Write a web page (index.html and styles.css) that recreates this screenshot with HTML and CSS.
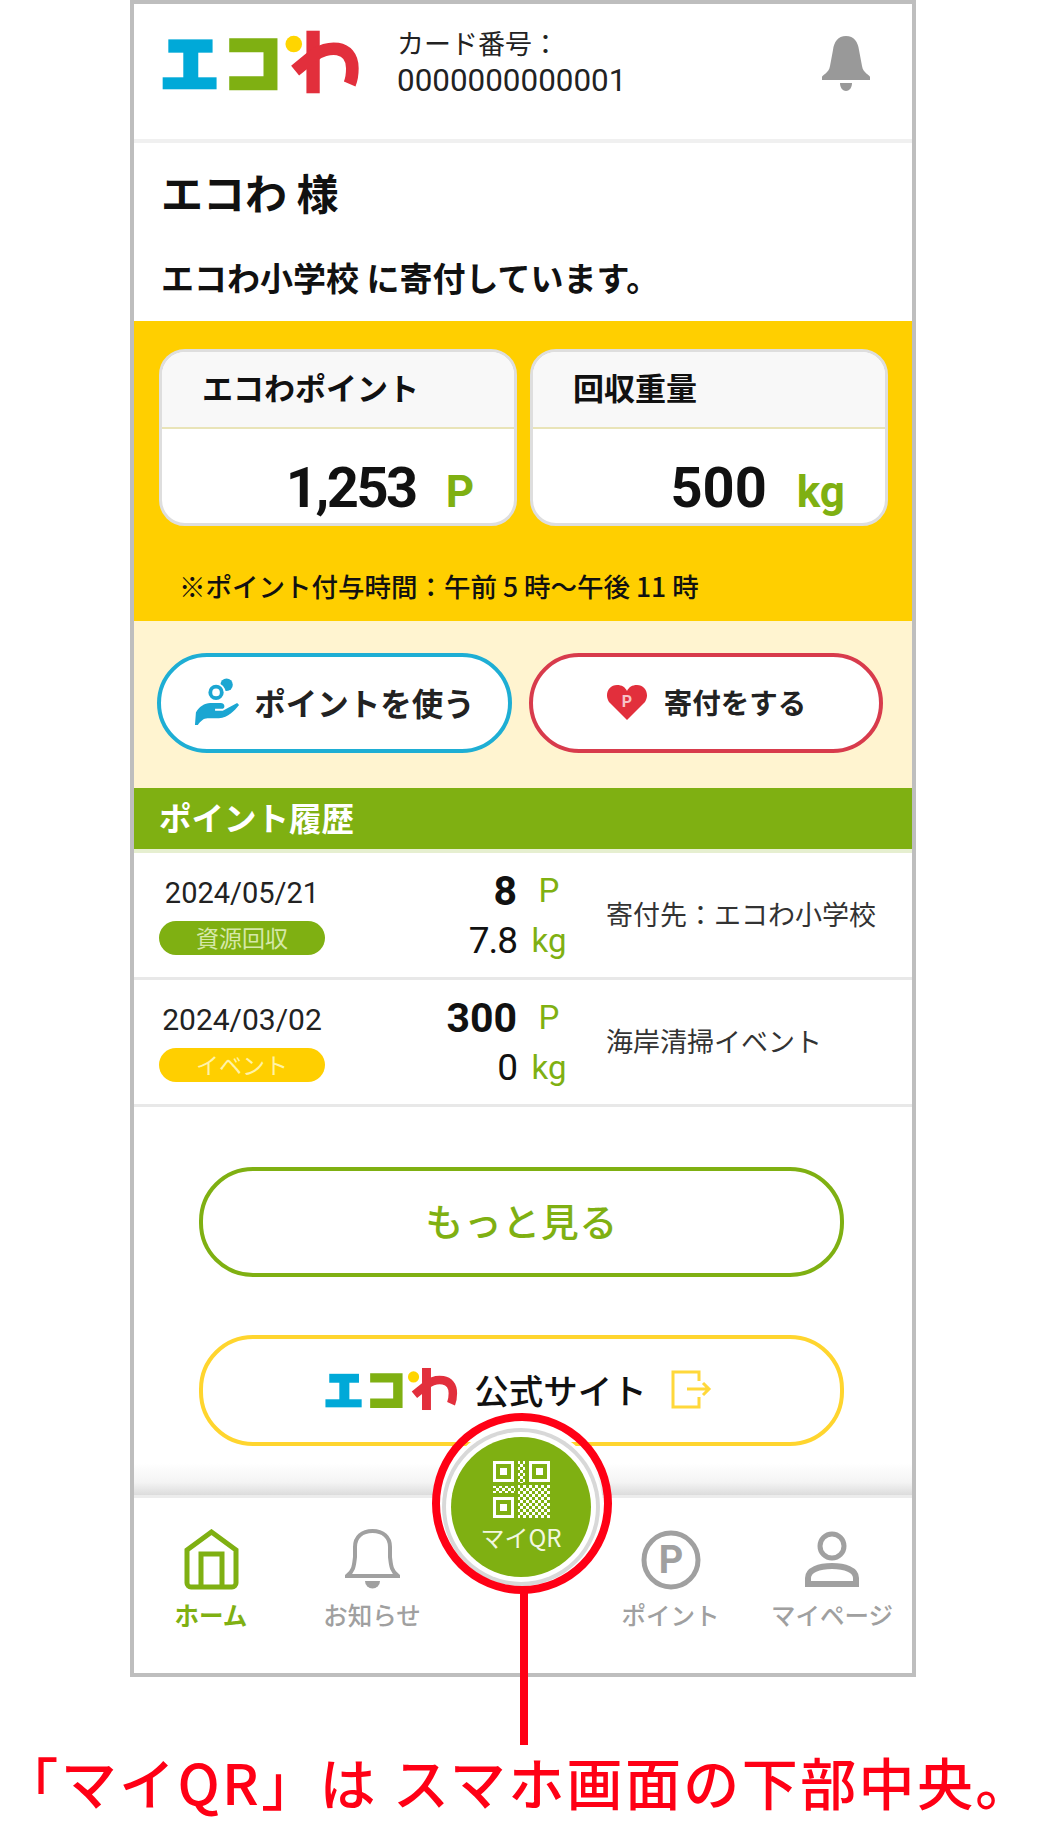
FILE: index.html
```html
<!DOCTYPE html>
<html lang="ja">
<head>
  <meta charset="UTF-8" />
  <meta name="viewport" content="width=device-width, initial-scale=1.0" />
  <title>エコわ マイQR</title>
  <link rel="stylesheet" href="styles.css">
</head>
<body>

  <svg class="defs" width="0" height="0" aria-hidden="true">
    <symbol id="logo" viewBox="36 30 595 192">
      <rect x="55" y="58" width="133" height="40" fill="#00a9d8" />
      <rect x="100" y="90" width="45" height="90" fill="#00a9d8" />
      <rect x="38" y="172" width="162" height="36" fill="#00a9d8" />
      <path d="M238 76H362V190H238" fill="none" stroke="#7fb012" stroke-width="42" />
      <circle cx="432" cy="72" r="25" fill="#ffd500" />
      <rect x="470" y="32" width="40" height="188" fill="#e22f3c" />
      <path d="M436 152L490 108C530 76 608 72 608 145C608 165 606 178 600 192" fill="none" stroke="#e22f3c" stroke-width="38" />
    </symbol>
  </svg>

  <main class="phone">
    <header class="top-bar">
      <svg class="logo" width="198" height="64"><use href="#logo" /></svg>
      <div class="card-no">
        <div>カード番号：</div>
        <div class="card-no-value">0000000000001</div>
      </div>
      <svg class="top-bell" width="48" height="55" viewBox="0 0 48 55">
        <path d="M24 0C32 0 36 6 37 14L40 30C41 37 48 39 48 41V44H0V41C0 39 7 37 8 30L11 14C12 6 16 0 24 0Z" fill="#999" />
        <path d="M18 47H30C30 52 27 55 24 55C21 55 18 52 18 47Z" fill="#999" />
      </svg>
    </header>

    <section class="greeting">
      <h1>エコわ 様</h1>
      <p>エコわ小学校 に寄付しています。</p>
    </section>

    <section class="summary">
      <div class="summary-cards">
        <div class="stat-card">
          <div class="stat-label">エコわポイント</div>
          <div class="stat-value"><b class="tight">1,253</b><span>P</span></div>
        </div>
        <div class="stat-card">
          <div class="stat-label">回収重量</div>
          <div class="stat-value"><b>500</b><span>kg</span></div>
        </div>
      </div>
      <p class="summary-note">※ポイント付与時間：午前 5 時〜午後 11 時</p>
    </section>

    <section class="actions">
      <a class="pill pill-blue">
        <svg width="46" height="48" viewBox="10 12 48 50">
          <circle cx="44" cy="19" r="6.5" fill="#1ba6d2" />
          <circle cx="33" cy="27" r="10" fill="#fff" />
          <circle cx="33" cy="27" r="6" fill="none" stroke="#1ba6d2" stroke-width="4" />
          <path d="M11 61L12 48C15 42 21 38 27 38H38C42 38 43 43 40 44H32V46H40L55 38L57 40C52 46 46 53 36 54H24C20 54 17 57 14 61Z" fill="#1ba6d2" />
        </svg>
        ポイントを使う
      </a>
      <a class="pill pill-red">
        <svg width="42" height="36" viewBox="0 0 42 36">
          <path d="M21 36L3 18C-2 10 3 1 11 1C16 1 19 3 21 7C23 3 26 1 31 1C39 1 44 10 39 18Z" fill="#e22f3c" />
          <text class="heart-p" x="21" y="23">P</text>
        </svg>
        寄付をする
      </a>
    </section>

    <h2 class="history-title">ポイント履歴</h2>
    <ul class="history">
      <li class="history-row">
        <div class="history-date">
          <time>2024/05/21</time>
          <span class="badge badge-green">資源回収</span>
        </div>
        <div class="history-amounts">
          <b>8</b><span>P</span>
          <em>7.8</em><span>kg</span>
        </div>
        <p class="history-note">寄付先：エコわ小学校</p>
      </li>
      <li class="history-row">
        <div class="history-date">
          <time class="date-wide">2024/03/02</time>
          <span class="badge badge-yellow">イベント</span>
        </div>
        <div class="history-amounts">
          <b>300</b><span>P</span>
          <em>0</em><span>kg</span>
        </div>
        <p class="history-note">海岸清掃イベント</p>
      </li>
    </ul>

    <div class="links">
      <a class="wide-pill wide-green">もっと見る</a>
      <a class="wide-pill wide-yellow">
        <svg width="133" height="44"><use href="#logo" /></svg>
        <span>公式サイト</span>
        <svg class="exit-icon" width="41" height="39" viewBox="0 0 41 39">
          <path d="M28 11V2H2V37H28V27M16 19H38M32 13L38 19L32 25" fill="none" stroke="#ffd83a" stroke-width="3" />
        </svg>
      </a>
    </div>

    <nav class="tab-bar">
      <a class="tab tab-active">
        <svg width="55" height="61" viewBox="0 0 55 61">
          <path d="M27.5 3L52 21V54A4 4 0 0 1 48 58H7A4 4 0 0 1 3 54V21ZM17 58V25H38V58" fill="none" stroke="#7fb012" stroke-width="5" />
        </svg>
        <span>ホーム</span>
      </a>
      <a class="tab">
        <svg width="55" height="61" viewBox="0 0 55 61">
          <path d="M2 47H53C46 42 46 36 45 28V18C45 8 38 2 27.5 2C17 2 10 8 10 18V28C9 36 9 42 2 47Z" fill="none" stroke="#a0a0a0" stroke-width="4" />
          <path d="M20 52A7.5 7.5 0 0 0 35 52Z" fill="#a0a0a0" />
        </svg>
        <span>お知らせ</span>
      </a>
      <div class="tab-gap"></div>
      <a class="tab">
        <svg width="60" height="61" viewBox="0 0 60 61">
          <circle cx="30" cy="31" r="27" fill="none" stroke="#a0a0a0" stroke-width="5" />
          <text class="tab-p" x="30" y="44">P</text>
        </svg>
        <span>ポイント</span>
      </a>
      <a class="tab">
        <svg width="54" height="61" viewBox="0 0 54 61">
          <circle cx="27" cy="17" r="12" fill="none" stroke="#a0a0a0" stroke-width="5" />
          <path d="M3 55V49C3 41 14 37 27 37C40 37 51 41 51 49V55Z" fill="none" stroke="#a0a0a0" stroke-width="6" />
        </svg>
        <span>マイページ</span>
      </a>

      <a class="qr-button">
        <svg width="57" height="57" viewBox="0 0 57 57">
          <defs>
            <pattern id="dots" width="6" height="6" patternUnits="userSpaceOnUse">
              <rect width="3" height="3" fill="#fff" />
              <rect x="3" y="3" width="3" height="3" fill="#fff" />
            </pattern>
          </defs>
          <g fill="none" stroke="#fff" stroke-width="3">
            <rect x="1.5" y="1.5" width="18" height="18" />
            <rect x="37.5" y="1.5" width="18" height="18" />
            <rect x="1.5" y="37.5" width="18" height="18" />
          </g>
          <g fill="#fff">
            <rect x="7" y="7" width="7" height="7" />
            <rect x="43" y="7" width="7" height="7" />
            <rect x="7" y="43" width="7" height="7" />
          </g>
          <rect x="25" y="0" width="7" height="22" fill="url(#dots)" />
          <rect x="0" y="25" width="22" height="7" fill="url(#dots)" />
          <rect x="25" y="24" width="32" height="33" fill="url(#dots)" />
        </svg>
        <span>マイQR</span>
      </a>
    </nav>
  </main>

  <div class="callout-ring"></div>
  <div class="callout-line"></div>
  <p class="caption">「マイQR」は スマホ画面の下部中央。</p>

</body>
</html>
```

FILE: styles.css
```css
* {
  box-sizing: border-box;
}

body {
  position: relative;
  margin: 0;
  width: 1044px;
  height: 1822px;
  overflow: hidden;
  font-family: "Noto Sans CJK JP", "Noto Sans", sans-serif;
  color: #111;
  background: #fff;
}

.defs {
  position: absolute;
}

p,
h1,
h2,
ul {
  margin: 0;
  padding: 0;
}

.phone {
  display: flex;
  flex-direction: column;
  width: 786px;
  height: 1677px;
  margin-left: 130px;
  border: 4px solid #bebebe;
}

/* header */
.top-bar {
  display: flex;
  flex: none;
  height: 139px;
  padding: 26px 42px 0 28px;
  border-bottom: 4px solid #f0f0f0;
}

.card-no {
  margin-left: 37px;
  margin-top: -4px;
  font-size: 27px;
  line-height: 34px;
  color: #222;
}

.card-no-value {
  margin-top: 4px;
  font-family: Roboto, sans-serif;
  font-size: 31.4px;
}

.top-bell {
  margin: 6px 0 0 auto;
}

.greeting {
  flex: none;
  height: 178px;
  padding: 21px 0 0 27px;
}

.greeting h1 {
  font-size: 42px;
  line-height: 56px;
  font-weight: 700;
}

.greeting p {
  margin-top: 37px;
  font-size: 33px;
  line-height: 40px;
  font-weight: 700;
}

/* yellow summary */
.summary {
  flex: none;
  height: 300px;
  padding: 28px 0 0 25px;
  background: #ffcf00;
}

.summary-cards {
  display: grid;
  grid-template-columns: 358px 358px;
  gap: 13px;
}

.stat-card {
  height: 177px;
  background: #fff;
  border: 3px solid #dedede;
  border-radius: 26px;
  overflow: hidden;
}

.stat-label {
  height: 77px;
  padding-left: 40px;
  font-size: 31px;
  line-height: 70px;
  font-weight: 700;
  background: #f8f8f8;
  border-bottom: 2px solid #e9e4b8;
}

.stat-value {
  display: flex;
  justify-content: flex-end;
  align-items: baseline;
  gap: 30px;
  padding: 13px 40px 0 0;
  font-family: Roboto, sans-serif;
  line-height: 92px;
}

.stat-value b {
  font-size: 56px;
}

.stat-value b.tight {
  letter-spacing: -2.5px;
}

.stat-value span {
  font-size: 44px;
  font-weight: 700;
  color: #7fb012;
}

.summary-note {
  margin-top: 40px;
  margin-left: 20px;
  font-size: 26.5px;
  line-height: 40px;
  font-weight: 500;
  white-space: nowrap;
}

/* action buttons */
.actions {
  display: grid;
  grid-template-columns: 355px 354px;
  gap: 17px;
  flex: none;
  height: 167px;
  padding: 32px 0 0 23px;
  background: #fff4d0;
}

.pill {
  display: flex;
  justify-content: center;
  align-items: center;
  gap: 14px;
  height: 100px;
  padding-bottom: 3px;
  background: #fff;
  border: 4px solid;
  border-radius: 50px;
  font-weight: 700;
  font-size: 31.5px;
  color: #222;
}

.pill-blue {
  border-color: #1eaed4;
}

.pill-red {
  border-color: #d83b4c;
  gap: 16px;
  font-size: 28.5px;
}

.heart-p {
  font-family: Roboto, sans-serif;
  font-size: 16px;
  font-weight: 700;
  text-anchor: middle;
  fill: #f7c2c8;
}

/* history */
.history-title {
  flex: none;
  height: 65px;
  padding-left: 25px;
  font-size: 32.5px;
  line-height: 57px;
  font-weight: 700;
  color: #fff;
  background: #7fb012;
  border-bottom: 4px solid #e6efd0;
}

.history {
  flex: none;
  list-style: none;
}

.history-row {
  display: grid;
  grid-template-columns: 166px 192px 64px 1fr;
  height: 127px;
  padding-left: 25px;
  border-bottom: 3px solid #e8e8e8;
}

.history-date {
  grid-column: 1;
  padding-top: 20px;
  text-align: center;
}

.history-date time {
  display: block;
  height: 48px;
  font-family: Roboto, sans-serif;
  font-size: 29px;
  line-height: 40px;
  color: #222;
}

.history-date .date-wide {
  font-size: 30px;
}

.badge {
  display: block;
  height: 34px;
  border-radius: 17px;
  font-size: 23px;
  line-height: 32px;
}

.badge-green {
  color: #d6e8a8;
  background: #7fb012;
}

.badge-yellow {
  color: #fff3a8;
  background: #ffcf00;
}

.history-amounts {
  display: grid;
  grid-column: 2 / 4;
  grid-template-columns: 192px 64px;
  grid-auto-rows: 50px;
  align-items: center;
  padding-top: 13px;
  font-family: Roboto, sans-serif;
  font-size: 37px;
  line-height: 50px;
}

.history-amounts b,
.history-amounts em {
  text-align: right;
  font-style: normal;
  color: #111;
}

.history-amounts b {
  font-size: 41px;
}

.history-amounts em {
  letter-spacing: -1px;
}

.history-amounts span {
  text-align: center;
  font-size: 33px;
  color: #7fb012;
}

.history-note {
  align-self: center;
  margin-bottom: 4px;
  padding-left: 25px;
  font-size: 27px;
  color: #333;
  white-space: nowrap;
}

/* link buttons */
.links {
  flex: none;
  display: flex;
  flex-direction: column;
  gap: 58px;
  width: 645px;
  margin: 60px 0 0 65px;
}

.wide-pill {
  display: flex;
  justify-content: center;
  align-items: center;
  height: 111px;
  background: #fff;
  border: 4px solid;
  border-radius: 54px;
}

.wide-green {
  height: 110px;
  padding-bottom: 5px;
  border-color: #7fb012;
  font-size: 38px;
  font-weight: 500;
  letter-spacing: 0.5px;
  color: #7fb012;
}

.wide-yellow {
  padding: 0 6px 3px 0;
  border-color: #ffd52e;
  font-size: 34.5px;
  font-weight: 500;
  color: #111;
}

.wide-yellow span {
  margin-left: 16px;
}

.exit-icon {
  margin-left: 24px;
}

/* bottom tabs */
.tab-bar {
  position: relative;
  display: grid;
  grid-template-columns: 154px 168px 128px 173px 150px;
  margin-top: auto;
  height: 178px;
  padding-top: 31px;
  background: #fff;
  border-top: 3px solid #ececec;
}

.tab-bar::before {
  content: "";
  position: absolute;
  left: 0;
  right: 0;
  top: -35px;
  height: 32px;
  background: linear-gradient(to bottom, rgba(230, 230, 230, 0), #f4f4f4 60%, #dcdcdc);
}

.tab {
  display: flex;
  flex-direction: column;
  align-items: center;
  gap: 9px;
  font-size: 24.5px;
  line-height: 32px;
  font-weight: 500;
  color: #a0a0a0;
}

.tab svg {
  display: block;
}

.tab-active {
  font-weight: 700;
  color: #7fb012;
}

.tab-p {
  font-family: Roboto, sans-serif;
  font-size: 38px;
  font-weight: 700;
  text-anchor: middle;
  fill: #a0a0a0;
}

.qr-button {
  position: absolute;
  left: 317px;
  top: -61px;
  display: flex;
  flex-direction: column;
  align-items: center;
  width: 140px;
  height: 140px;
  padding-top: 24px;
  border-radius: 50%;
  font-size: 24px;
  line-height: 34px;
  color: #f2f7e0;
  background: #7fb012;
  box-shadow: 0 0 0 5px #fff, 0 0 0 9px #d8d8d8, 0 0 0 12px #fff;
}

.qr-button span {
  margin-top: 2px;
}

/* red annotation */
.callout-ring {
  position: absolute;
  left: 432px;
  top: 1413px;
  width: 180px;
  height: 181px;
  border: 8px solid #ff0015;
  border-radius: 50%;
}

.callout-line {
  position: absolute;
  left: 520px;
  top: 1592px;
  width: 8px;
  height: 153px;
  background: #ff0015;
}

.caption {
  margin-top: 72px;
  padding-right: 8px;
  font-size: 56px;
  line-height: 64px;
  font-weight: 500;
  letter-spacing: 2.4px;
  text-align: center;
  white-space: nowrap;
  color: #ff0015;
}
```
